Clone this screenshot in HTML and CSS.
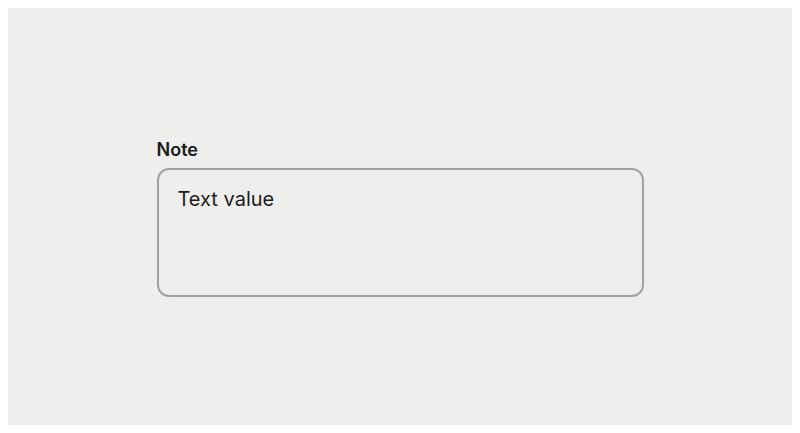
FILE: index.html
```html
<!DOCTYPE html>
<html>
<head>
<meta charset="utf-8">
<link rel="stylesheet" href="styles.css">
</head>
<body>
<div class="stage">
  <div class="field">
    <label class="label">Note</label>
    <div class="box">Text value</div>
  </div>
</div>
</body>
</html>
```
FILE: styles.css
```css
html, body { background: #ffffff; }
body { margin: 8px; font-family: Inter, "Noto Sans", sans-serif; color: #1b1b1b; }
.stage {
  box-sizing: border-box;
  width: 784px;
  height: 417px;
  padding-top: 4px;
  background: #eeefed;
  display: flex;
  align-items: center;
  justify-content: center;
}
.field {
  width: 487px;
  display: flex;
  flex-direction: column;
  gap: 8px;
}
.label {
  font-size: 18px;
  font-weight: 600;
  line-height: 20px;
}
.box {
  box-sizing: border-box;
  height: 129px;
  border: 2px solid #a2a2a2;
  border-radius: 12px;
  padding: 15px 19px;
  font-size: 20px;
  line-height: 28px;
}
```
